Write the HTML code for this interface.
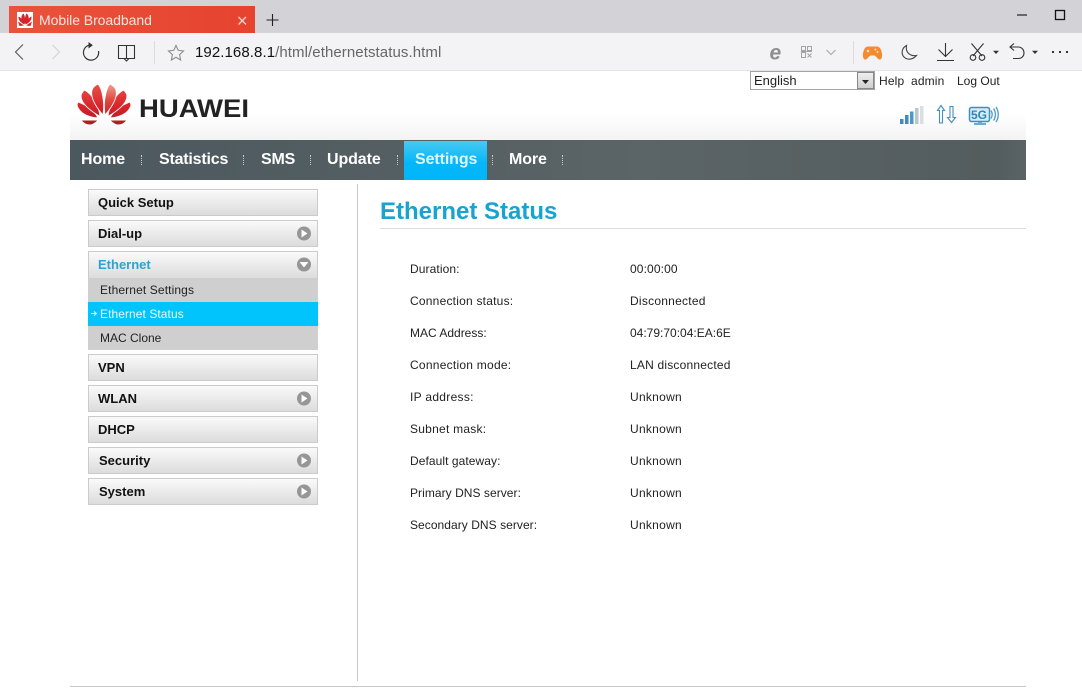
<!DOCTYPE html>
<html><head><meta charset="utf-8"><title>Mobile Broadband</title>
<style>
*{box-sizing:border-box}
html,body{margin:0;padding:0;width:1082px;height:688px;overflow:hidden;background:#fff;font-family:"Liberation Sans",Arial,sans-serif;font-size:12px;color:#222}
.a{position:absolute;white-space:nowrap}
#title{left:0;top:0;width:1082px;height:33px;background:#d3d3d7}
#tb{left:0;top:33px;width:1082px;height:38px;background:#f3f3f5;border-bottom:1px solid #e4e4e6}
#tab{left:9px;top:6px;width:246px;height:27px;background:linear-gradient(90deg,#e9533b,#e6432f)}
#hdr{left:70px;top:71px;width:956px;height:69px;background:linear-gradient(#fff 0,#fff 62%,#f3f3f3 100%)}
#nav{left:70px;top:140px;width:956px;height:40px;background:linear-gradient(90deg,#4b585e 0,#566064 40%,#5b6466 60%,#535c5e 97%,#5a6365 100%)}
.n{top:150px;font-size:16px;line-height:19px;font-weight:bold;color:#fff;letter-spacing:-.1px}
.d{top:155px;width:1px;height:10px;border-left:1px dotted #c4caca}
.m{left:88px;width:230px;height:27px;border:1px solid #cbcbcb;background:linear-gradient(#fafafa,#dcdcdc);font-size:13px;font-weight:bold;line-height:25px;padding-left:9px;color:#111}
.s{left:88px;width:230px;height:24px;background:#cfcfcf;line-height:24px;padding-left:12px;color:#222}
.l{left:410px;line-height:14px;color:#222}
.v{left:630px;line-height:14px;color:#222}
</style></head><body>
<div class="a" id="title"></div>
<div class="a" id="tb"></div>
<div class="a" id="tab"></div>
<svg class="a" style="left:0;top:0" width="1082" height="70" viewBox="0 0 1082 70" fill="none">
<rect x="17" y="12" width="16" height="16" fill="#fff"/>
<g fill="#d8232a"><path d="M25 24C21 21 20 16 23.500 13.500C25 16 25.500 20 25 24Z"/><path d="M25 24C29 21 30 16 26.500 13.500C25 16 24.500 20 25 24Z"/><path d="M24.500 24.500C21 23 18 20 18.500 16.500C21.500 18 24 21 24.500 24.500Z"/><path d="M25.500 24.500C29 23 32 20 31.500 16.500C28.500 18 26 21 25.500 24.500Z"/><path d="M18 21.500L24 25.500L19.500 26ZM32 21.500L26 25.500L30.500 26Z"/></g>
<path d="M238.500 17L246 24.500M246 17L238.500 24.500" stroke="#f8d5ce" stroke-width="1.300"/>
<path d="M272.500 14V26M266.500 20H278.500" stroke="#222" stroke-width="1.100"/>
<path d="M1017 15H1027" stroke="#222" stroke-width="1.200"/>
<rect x="1055.500" y="10.500" width="9" height="9" stroke="#111" stroke-width="1.300"/>
<path d="M23 44.500L15.500 52L23 59.500" stroke="#555" stroke-width="1.100"/>
<path d="M52.500 45L59.500 52L52.500 59" stroke="#d2d2d4" stroke-width="1.100"/>
<path d="M92 45A7.600 7.600 0 1 0 98.500 51" stroke="#333" stroke-width="1.200"/>
<path d="M88.500 42L92.800 45.300L88.500 48.500Z" fill="#333"/>
<path d="M118.500 45.500H126.500V58.500H118.500ZM126.500 45.500H134.500V58.500H126.500Z" stroke="#333" stroke-width="1.100"/>
<path d="M124 58.500L126.500 61L129 58.500" stroke="#333" stroke-width="1"/>
<path d="M154.500 41V64" stroke="#dcdcde"/>
<path d="M176 45.500L178.200 50.300L183.500 51L179.600 54.600L180.600 60L176 57.300L171.400 60L172.400 54.600L168.500 51L173.800 50.300Z" stroke="#8c8c8c" stroke-width="1.100"/>
<text x="769.500" y="59.500" font-family="Liberation Sans" font-weight="bold" font-style="italic" font-size="21" fill="#8e8e90">e</text>
<g stroke="#a4a4a6" stroke-width="1"><rect x="801.500" y="46.500" width="4" height="4"/><rect x="807.500" y="46.500" width="4" height="4"/><rect x="801.500" y="52.500" width="4" height="5"/><path d="M801 51.500H812M807.500 53.500L811.500 57.500M811.500 53.500L807.500 57.500"/></g>
<path d="M826.500 50L831 54.500L835.500 50" stroke="#a8a8aa" stroke-width="1.100"/>
<path d="M853.500 41V64" stroke="#dcdcde"/>
<path d="M868 46.500H877C880 46.500 881.500 50 882 54C882.500 58 881 60 879 59.500C877 58.500 876 55.500 874 55.500H871C869 55.500 868 58.500 866 59.500C864 60 862.500 58 863 54C863.500 50 865 46.500 868 46.500Z" fill="#f58a2e"/>
<circle cx="868" cy="51" r="1.300" fill="#fde0c4"/><circle cx="875.500" cy="49.500" r="1" fill="#fde0c4"/><circle cx="877.500" cy="52" r="1" fill="#fde0c4"/>
<path d="M906.500 45.500C901.500 48 901 54 904 57C907.500 60.500 913 59.500 916.500 55.500C911 56.500 905 53 906.500 45.500Z" stroke="#444" stroke-width="1.100"/>
<path d="M945.500 43V56.500M938.500 49.500L945.500 56.500L952.500 49.500M937 60.500H954" stroke="#333" stroke-width="1.100"/>
<path d="M971.500 43.500L982 56M983.500 43.500L973 56" stroke="#333" stroke-width="1.100"/>
<circle cx="973" cy="57.500" r="2.800" stroke="#333" stroke-width="1.100"/><circle cx="982" cy="57.500" r="2.800" stroke="#333" stroke-width="1.100"/>
<path d="M993 50.800H999L996 54Z" fill="#333"/>
<path d="M1010 47H1018C1022 47 1024 50 1024 53C1024 56 1022 58.500 1018 58.500H1013" stroke="#333" stroke-width="1.100"/>
<path d="M1014 43.500L1010 47L1014 50.500" stroke="#333" stroke-width="1.100"/>
<path d="M1032 50.800H1038L1035 54Z" fill="#333"/>
<g fill="#333"><rect x="1052" y="51" width="2" height="2"/><rect x="1059" y="51" width="2" height="2"/><rect x="1066" y="51" width="2" height="2"/></g>
</svg>
<div class="a" style="left:39px;top:12px;font-size:14px;line-height:16px;color:#fbe3de;letter-spacing:-.05px">Mobile Broadband</div>
<div class="a" style="left:195px;top:44px;font-size:15px;line-height:18px;color:#666;letter-spacing:.08px"><span style="color:#111">192.168.8.1</span>/html/ethernetstatus.html</div>

<div class="a" id="hdr"></div>
<svg class="a" style="left:70px;top:76px" width="190" height="56" viewBox="70 76 190 56">
<defs><linearGradient id="g" x1="0" y1="84" x2="0" y2="126" gradientUnits="userSpaceOnUse"><stop offset="0" stop-color="#e8504a"/><stop offset=".55" stop-color="#d8232a"/><stop offset="1" stop-color="#a51c22"/></linearGradient>
<linearGradient id="g2" x1="0" y1="84" x2="0" y2="116" gradientUnits="userSpaceOnUse"><stop offset="0" stop-color="#f0a090"/><stop offset=".5" stop-color="#e2483e"/><stop offset="1" stop-color="#c8202a"/></linearGradient></defs>
<g fill="url(#g)" stroke="#fff" stroke-width=".9">
<path d="M81 120H98.500C96 122.500 93 125 90 125C86 125 83 123 81 120Z"/>
<path d="M127 120H109.500C112 122.500 115 125 118 125C122 125 125 123 127 120Z"/>
<path d="M98 118C90 117.500 79 114 77 105C77 104 77 104 78 102C86 105 94 110 98 118Z"/>
<path d="M110 118C118 117.500 129 114 131 105C131 104 131 104 130 102C122 105 114 110 110 118Z"/>
<path d="M100 116.500C91 111 81 104 81 96C81 94 83 91 84.500 90C92 94 99 105 100 116.500Z"/>
<path d="M108 116.500C117 111 127 104 127 96C127 94 125 91 123.500 90C116 94 109 105 108 116.500Z"/>
<path d="M103 115C96 107 90 98 92 90C93 87 96 85 98 84C102 88 105 102 103 115Z"/>
</g>
<path d="M105 115C112 107 118 98 116 90C115 87 112 85 110 84C106 88 103 102 105 115Z" fill="url(#g2)" stroke="#fff" stroke-width=".9"/>
<text x="139" y="117" font-family="Liberation Sans" font-weight="bold" font-size="25" fill="#222" textLength="110" lengthAdjust="spacingAndGlyphs">HUAWEI</text>
</svg>

<div class="a" style="left:750px;top:71px;width:125px;height:19px;border:1px solid #a3a3a3;background:#fff;font-size:13px;line-height:18px;padding-left:3px;color:#222">English</div>
<div class="a" style="left:857px;top:72px;width:17px;height:17px;border:1px solid #888;background:linear-gradient(#eee,#cfcfcf)"></div>
<svg class="a" style="left:857px;top:72px" width="17" height="17"><path d="M5 8H12L8.500 12Z" fill="#222"/></svg>
<div class="a" style="left:879px;top:74px;line-height:14px;letter-spacing:.15px">Help</div>
<div class="a" style="left:911px;top:74px;line-height:14px;letter-spacing:.15px">admin</div>
<div class="a" style="left:957px;top:74px;line-height:14px">Log Out</div>

<svg class="a" style="left:890px;top:100px" width="115" height="32" fill="none">
<rect x="10" y="19" width="3.500" height="5" fill="#3e8dbd"/>
<rect x="15" y="15" width="3.500" height="9" fill="#3e8dbd"/>
<rect x="20" y="11.500" width="3.500" height="12.500" fill="#4a9ac8"/>
<rect x="25" y="8" width="3.500" height="16" fill="#bcc6cc"/>
<rect x="30" y="6" width="3.500" height="18" fill="#dcdfe0"/>
<path d="M49.500 23V10.500H47.500L51 5.500L54.500 10.500H52.500V23Z" stroke="#3e90c0" stroke-width="1.100"/>
<path d="M60 6.500V17.500H57.500L61.500 22.500L65.500 17.500H63V6.500Z" stroke="#3e90c0" stroke-width="1.100"/>
<rect x="79.500" y="7.500" width="20" height="14" rx="2" fill="#d6ecf7" stroke="#3e90c0" stroke-width="1.500"/>
<path d="M84 24H96" stroke="#3e90c0" stroke-width="1.500"/><path d="M88 22H92" stroke="#3e90c0" stroke-width="1.500"/>
<text x="81" y="19" font-family="Liberation Sans" font-weight="bold" font-size="12" fill="#2f86ba">5G</text>
<path d="M101 10.500C102.500 13 102.500 16 101 18.500M103.500 8.500C106 12 106 17 103.500 20.500M106 7C109 11.500 109 17.500 106 22" stroke="#4a9ac8" stroke-width="1.300"/>
</svg>

<div class="a" id="nav"></div>
<div class="a" style="left:404px;top:141px;width:83px;height:39px;background:linear-gradient(#48c9f2,#05b7f8 55%,#00b6fa)"></div>
<div class="a n" style="left:81px">Home</div>
<div class="a n" style="left:159px;letter-spacing:-.2px">Statistics</div>
<div class="a n" style="left:261px;letter-spacing:-.2px">SMS</div>
<div class="a n" style="left:327px">Update</div>
<div class="a n" style="left:415px;color:#dff6ff">Settings</div>
<div class="a n" style="left:509px">More</div>
<div class="a d" style="left:141px"></div><div class="a d" style="left:243px"></div><div class="a d" style="left:310px"></div><div class="a d" style="left:397px"></div><div class="a d" style="left:492px"></div><div class="a d" style="left:562px"></div>

<div class="a m" style="top:189px">Quick Setup</div>
<div class="a m" style="top:220px">Dial-up</div>
<div class="a m" style="top:251px;color:#2fa3d0;border-bottom:0">Ethernet</div>
<div class="a s" style="top:278px;letter-spacing:.12px">Ethernet Settings</div>
<div class="a s" style="top:302px;background:#00c4fb;color:#eefbff;letter-spacing:.07px">Ethernet Status</div>
<div class="a s" style="top:326px">MAC Clone</div>
<div class="a m" style="top:354px">VPN</div>
<div class="a m" style="top:385px">WLAN</div>
<div class="a m" style="top:416px">DHCP</div>
<div class="a m" style="top:447px;padding-left:10px">Security</div>
<div class="a m" style="top:478px;padding-left:10px">System</div>
<svg class="a" style="left:88px;top:189px" width="230" height="320">
<path d="M3 124.500H8M6 122.500L8.500 124.500L6 126.500" stroke="#e6faff" fill="none"/>
<g fill="#969696"><circle cx="216" cy="44.500" r="7"/><circle cx="216" cy="75.500" r="7"/><circle cx="216" cy="209.500" r="7"/><circle cx="216" cy="271.500" r="7"/><circle cx="216" cy="302.500" r="7"/></g>
<g fill="#fff"><path d="M213.500 40.500L219.500 44.500L213.500 48.500Z"/><path d="M211.500 73L220.500 73L216 78.500Z"/><path d="M213.500 205.500L219.500 209.500L213.500 213.500Z"/><path d="M213.500 267.500L219.500 271.500L213.500 275.500Z"/><path d="M213.500 298.500L219.500 302.500L213.500 306.500Z"/></g>
</svg>

<div class="a" style="left:357px;top:184px;width:1px;height:497px;background:#c8c8c8"></div>
<div class="a" style="left:380px;top:198px;font-size:24px;line-height:28px;font-weight:bold;color:#18a3d1">Ethernet Status</div>
<div class="a" style="left:380px;top:228px;width:646px;height:1px;background:#dcdcdc"></div>

<div class="a l" style="top:262px;letter-spacing:.1px">Duration:</div><div class="a v" style="top:262px;letter-spacing:.12px">00:00:00</div>
<div class="a l" style="top:294px;letter-spacing:.22px">Connection status:</div><div class="a v" style="top:294px;letter-spacing:.25px">Disconnected</div>
<div class="a l" style="top:326px">MAC Address:</div><div class="a v" style="top:326px">04:79:70:04:EA:6E</div>
<div class="a l" style="top:358px;letter-spacing:.25px">Connection mode:</div><div class="a v" style="top:358px;letter-spacing:.2px">LAN disconnected</div>
<div class="a l" style="top:390px;letter-spacing:.3px">IP address:</div><div class="a v" style="top:390px;letter-spacing:.28px">Unknown</div>
<div class="a l" style="top:422px;letter-spacing:.25px">Subnet mask:</div><div class="a v" style="top:422px;letter-spacing:.28px">Unknown</div>
<div class="a l" style="top:454px;letter-spacing:.07px">Default gateway:</div><div class="a v" style="top:454px;letter-spacing:.28px">Unknown</div>
<div class="a l" style="top:486px;letter-spacing:.05px">Primary DNS server:</div><div class="a v" style="top:486px;letter-spacing:.28px">Unknown</div>
<div class="a l" style="top:518px;letter-spacing:.05px">Secondary DNS server:</div><div class="a v" style="top:518px;letter-spacing:.28px">Unknown</div>

<div class="a" style="left:70px;top:686px;width:956px;height:1px;background:#c8c8c8"></div>
</body></html>
